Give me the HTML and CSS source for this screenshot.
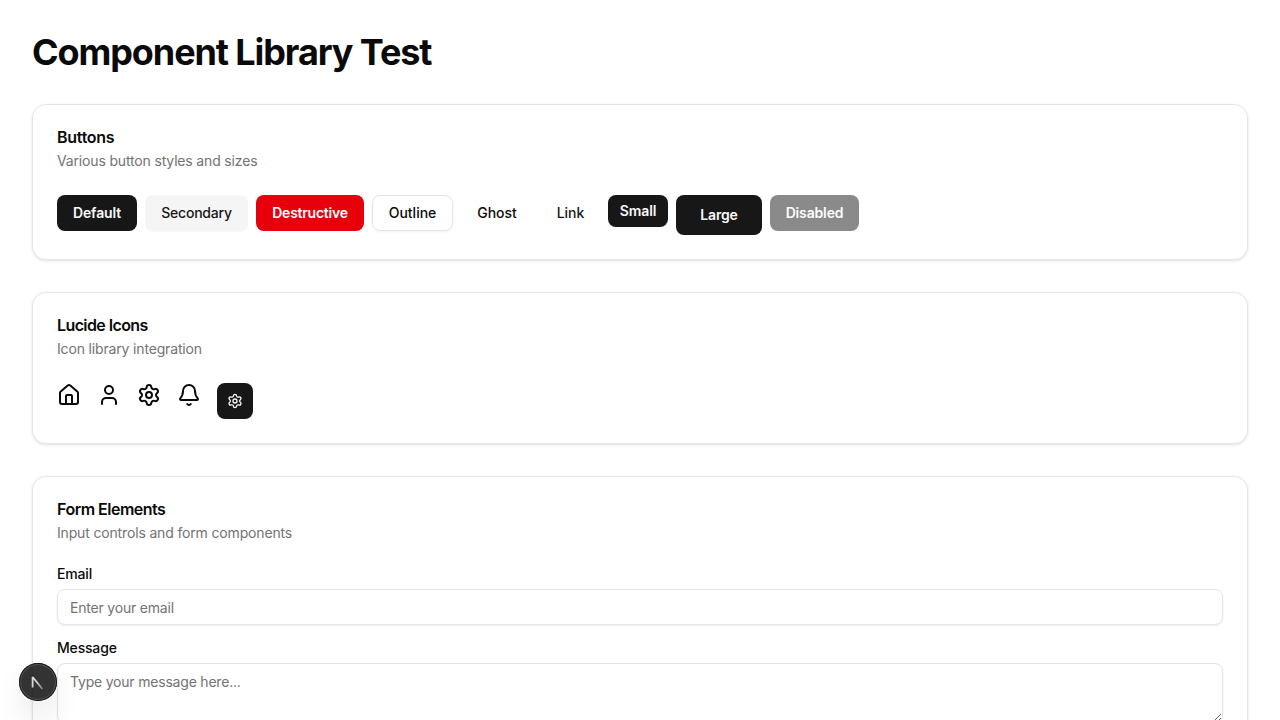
FILE: index.html
```html
<!DOCTYPE html>
<html lang="en">
<head>
<meta charset="utf-8">
<title>Component Library Test</title>
<link rel="stylesheet" href="styles.css">
</head>
<body>
<main class="page">
  <h1 class="page-title">Component Library Test</h1>

  <section class="card">
    <header class="card-header">
      <h2 class="card-title t-buttons">Buttons</h2>
      <p class="card-desc">Various button styles and sizes</p>
    </header>
    <div class="button-row">
      <button class="btn primary b-default">Default</button>
      <button class="btn secondary">Secondary</button>
      <button class="btn destructive">Destructive</button>
      <button class="btn outline">Outline</button>
      <button class="btn ghost">Ghost</button>
      <button class="btn link">Link</button>
      <button class="btn primary small">Small</button>
      <button class="btn primary large">Large</button>
      <button class="btn primary disabled" disabled>Disabled</button>
    </div>
  </section>

  <section class="card">
    <header class="card-header">
      <h2 class="card-title t-icons">Lucide Icons</h2>
      <p class="card-desc">Icon library integration</p>
    </header>
    <div class="icon-row">
      <svg class="icon" viewBox="0 0 24 24"><path d="M15 21v-8a1 1 0 0 0-1-1h-4a1 1 0 0 0-1 1v8"/><path d="M3 10a2 2 0 0 1 .709-1.528l7-5.999a2 2 0 0 1 2.582 0l7 5.999A2 2 0 0 1 21 10v9a2 2 0 0 1-2 2H5a2 2 0 0 1-2-2z"/></svg>
      <svg class="icon" viewBox="0 0 24 24"><path d="M19 21v-2a4 4 0 0 0-4-4H9a4 4 0 0 0-4 4v2"/><circle cx="12" cy="7" r="4"/></svg>
      <svg class="icon" viewBox="0 0 24 24"><path d="M9.671 4.136a2.34 2.34 0 0 1 4.659 0 2.34 2.34 0 0 0 3.319 1.915 2.34 2.34 0 0 1 2.33 4.033 2.34 2.34 0 0 0 0 3.831 2.34 2.34 0 0 1-2.33 4.033 2.34 2.34 0 0 0-3.319 1.915 2.34 2.34 0 0 1-4.659 0 2.34 2.34 0 0 0-3.32-1.915 2.34 2.34 0 0 1-2.33-4.033 2.34 2.34 0 0 0 0-3.831A2.34 2.34 0 0 1 6.35 6.051a2.34 2.34 0 0 0 3.319-1.915"/><circle cx="12" cy="12" r="3"/></svg>
      <svg class="icon" viewBox="0 0 24 24"><path d="M10.268 21a2 2 0 0 0 3.464 0"/><path d="M3.262 15.326A1 1 0 0 0 4 17h16a1 1 0 0 0 .74-1.673C19.41 13.956 18 12.499 18 8A6 6 0 0 0 6 8c0 4.499-1.411 5.956-2.738 7.326"/></svg>
      <button class="btn primary icon-btn" aria-label="Settings"><svg class="icon icon-small" viewBox="0 0 24 24"><path d="M9.671 4.136a2.34 2.34 0 0 1 4.659 0 2.34 2.34 0 0 0 3.319 1.915 2.34 2.34 0 0 1 2.33 4.033 2.34 2.34 0 0 0 0 3.831 2.34 2.34 0 0 1-2.33 4.033 2.34 2.34 0 0 0-3.319 1.915 2.34 2.34 0 0 1-4.659 0 2.34 2.34 0 0 0-3.32-1.915 2.34 2.34 0 0 1-2.33-4.033 2.34 2.34 0 0 0 0-3.831A2.34 2.34 0 0 1 6.35 6.051a2.34 2.34 0 0 0 3.319-1.915"/><circle cx="12" cy="12" r="3"/></svg></button>
    </div>
  </section>

  <section class="card">
    <header class="card-header">
      <h2 class="card-title t-form">Form Elements</h2>
      <p class="card-desc">Input controls and form components</p>
    </header>
    <div class="form">
      <div class="field">
        <label class="label" for="email">Email</label>
        <input class="input" id="email" type="email" placeholder="Enter your email">
      </div>
      <div class="field">
        <label class="label" for="message">Message</label>
        <textarea class="input textarea" id="message" placeholder="Type your message here..."></textarea>
      </div>
    </div>
  </section>
</main>

<div class="dev-badge">
  <svg class="dev-logo" viewBox="0 0 38 38">
    <defs>
      <linearGradient id="fade" x1="16" y1="16" x2="24" y2="26" gradientUnits="userSpaceOnUse"><stop offset="0.3" stop-color="#d8d8d8"/><stop offset="1" stop-color="#d8d8d8" stop-opacity="0.4"/></linearGradient>
    </defs>
    <path d="M13.6 24.6V14L23.4 26" fill="none" stroke="url(#fade)" stroke-width="1.8" stroke-linejoin="bevel"/>
  </svg>
</div>
</body>
</html>
```
FILE: styles.css
```css
* { box-sizing: border-box; margin: 0; }
html { overflow: hidden; height: 100%; }
body {
  height: 100%;
  overflow: hidden;
  background: #fff;
  color: #0a0a0a;
  font-family: Inter, "Liberation Sans", sans-serif;
  font-size: 14px;
  line-height: 20px;
}
.page { display: flex; flex-direction: column; gap: 32px; padding: 32px; }
.page-title { font-size: 36px; line-height: 40px; font-weight: 700; letter-spacing: -1.1px; }
.card {
  display: flex;
  flex-direction: column;
  gap: 24px;
  padding: 24px;
  border: 1px solid #e5e5e5;
  border-radius: 14px;
  box-shadow: 0 1px 3px rgba(0,0,0,.1), 0 1px 2px -1px rgba(0,0,0,.1);
}
.card-header { display: flex; flex-direction: column; gap: 6px; }
.card-title { font-size: 16px; line-height: 16px; font-weight: 600; }
.t-buttons { letter-spacing: -0.28px; }
.t-icons { letter-spacing: -0.6px; }
.t-form { letter-spacing: -0.5px; }
.card-desc { color: #737373; letter-spacing: -0.16px; }
.button-row { display: flex; align-items: flex-start; gap: 8px; }
.btn {
  display: flex;
  align-items: center;
  justify-content: center;
  height: 36px;
  padding: 0;
  border: 0;
  border-radius: 8px;
  background: transparent;
  color: #0a0a0a;
  font: 500 14px/20px Inter, "Liberation Sans", sans-serif;
  white-space: nowrap;
}
.primary { background: #171717; color: #fafafa; font-weight: 600; letter-spacing: -0.15px; }
.b-default { width: 80px; }
.secondary { width: 103px; background: #f5f5f5; color: #171717; letter-spacing: -0.2px; box-shadow: 0 1px 1px rgba(0,0,0,.03); }
.destructive { width: 108px; background: #e7000b; color: #fff; font-weight: 600; letter-spacing: -0.24px; }
.outline { width: 81px; border: 1px solid #e5e5e5; box-shadow: 0 1px 2px rgba(0,0,0,.05); }
.ghost { width: 72px; }
.link { width: 59px; color: #171717; }
.small { width: 60px; height: 32px; }
.large { width: 86px; height: 40px; }
.disabled { width: 89px; opacity: .5; }
.icon-row { display: flex; align-items: flex-start; gap: 16px; }
.icon { width: 24px; height: 24px; fill: none; stroke: currentColor; stroke-width: 2; stroke-linecap: round; stroke-linejoin: round; }
.icon-btn { width: 36px; }
.icon-small { width: 16px; height: 16px; }
.form { display: flex; flex-direction: column; gap: 16px; }
.field { display: flex; flex-direction: column; gap: 8px; }
.label { font-weight: 500; line-height: 14px; letter-spacing: -0.18px; }
.input {
  width: 100%;
  height: 36px;
  padding: 4px 12px;
  border: 1px solid #e5e5e5;
  border-radius: 8px;
  background: transparent;
  box-shadow: 0 1px 2px rgba(0,0,0,.08);
  font: 400 14px/20px Inter, "Liberation Sans", sans-serif;
  letter-spacing: -0.2px;
  outline: none;
}
.input::placeholder { color: #737373; opacity: 1; }
.textarea { display: block; height: 60px; padding: 8px 12px; resize: vertical; }
.dev-badge {
  position: fixed;
  left: 19px;
  bottom: 19px;
  width: 38px;
  height: 38px;
  border-radius: 50%;
  background: rgba(0,0,0,.8);
  box-shadow: 0 0 0 1px #171717 inset, 0 0 0 2px rgba(255,255,255,.14) inset, 0 16px 32px -8px rgba(0,0,0,.24);
}
.dev-logo { display: block; width: 38px; height: 38px; }
```
